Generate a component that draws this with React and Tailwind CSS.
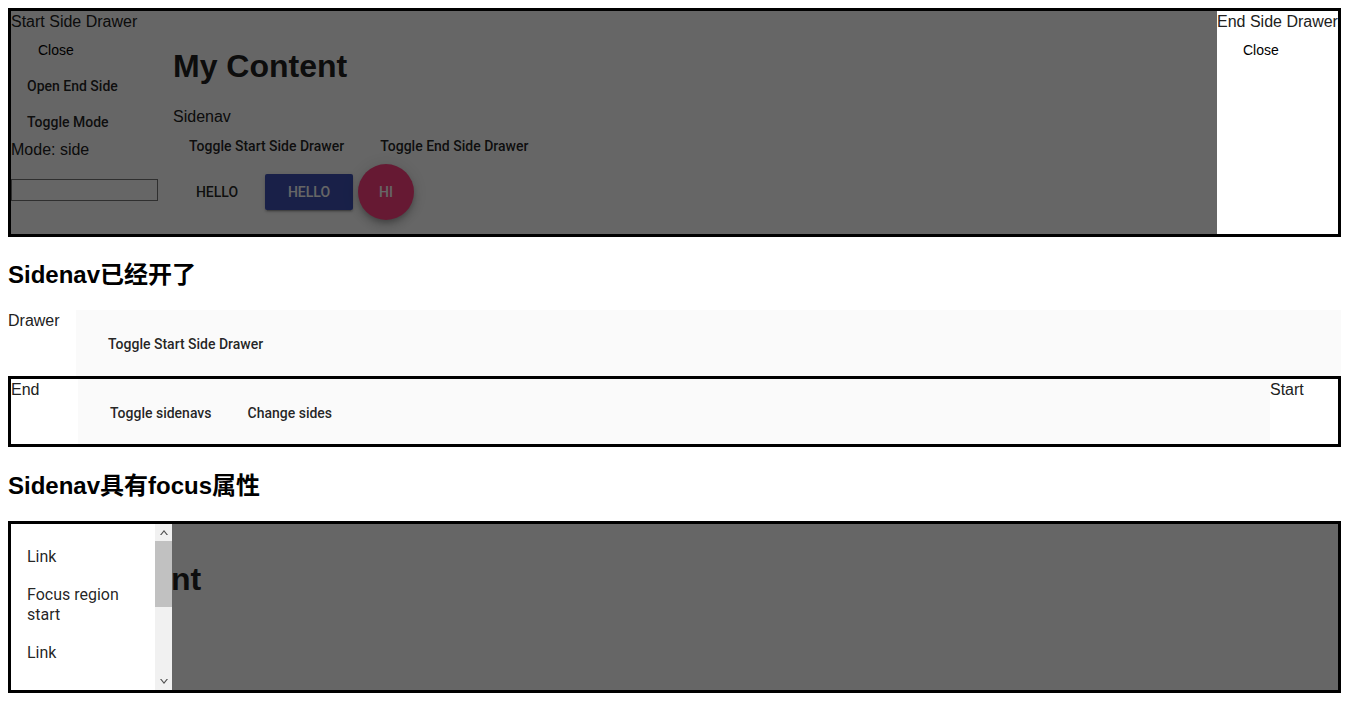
import React from "react";

const sans = "font-['Liberation_Sans','Noto_Sans_CJK_SC',sans-serif]";
const roboto = "font-['Roboto','Liberation_Sans',sans-serif]";

function MatButton({ children, className = "" }) {
  return (
    <button
      className={`h-9 shrink-0 px-4 text-left text-[14px] font-medium leading-9 text-[rgba(0,0,0,0.87)] ${roboto} ${className}`}
    >
      {children}
    </button>
  );
}

function Arrow({ down }) {
  return (
    <svg width="8" height="5" viewBox="0 0 8 5" className={down ? "rotate-180" : ""}>
      <path d="M0 5 L4 0 L8 5 L6.6 5 L4 1.8 L1.4 5 Z" fill="#505050" />
    </svg>
  );
}

export default function App() {
  return (
    <div className={`${sans} min-h-[701px] bg-white px-2 pt-2 text-[16px] text-black`}>
      {/* Section 1 */}
      <div className="relative flex h-[229px] overflow-hidden border-[3px] border-black">
        <aside className="flex w-[147px] shrink-0 flex-col bg-white pt-px">
          <div className="leading-[20px] text-[#212121]">Start Side Drawer</div>
          <button className={`h-9 pl-[27px] text-left text-[14px] leading-9 text-black ${sans}`}>Close</button>
          <MatButton>Open End Side</MatButton>
          <MatButton>Toggle Mode</MatButton>
          <div className="leading-[20px] text-[#212121]">Mode: side</div>
          <input className="mt-[19px] h-[22px] w-[147px] border border-[#767676] bg-white" />
        </aside>
        <main className="flex-1 bg-white pl-[15px] pr-4 pt-4">
          <h1 className="mb-[22px] mt-[21px] text-[32px] font-bold leading-[37px] text-[#212121]">My Content</h1>
          <div className="leading-[20px] text-[#212121]">Sidenav</div>
          <div className="mt-px flex gap-1">
            <MatButton>Toggle Start Side Drawer</MatButton>
            <MatButton>Toggle End Side Drawer</MatButton>
          </div>
          <div className="flex h-14 items-center gap-1">
            <button className={`h-9 w-[88px] text-center text-[14px] font-medium text-[rgba(0,0,0,0.87)] ${roboto}`}>HELLO</button>
            <button className={`h-9 w-[88px] rounded-[2px] bg-[#3f51b5] text-center text-[14px] font-medium text-white shadow-[0_3px_1px_-2px_rgba(0,0,0,0.2),0_2px_2px_0_rgba(0,0,0,0.14),0_1px_5px_0_rgba(0,0,0,0.12)] ${roboto}`}>HELLO</button>
            <button className={`ml-px flex h-14 w-14 items-center justify-center rounded-full bg-[#ff4081] text-[14px] font-medium text-white shadow-[0_3px_5px_-1px_rgba(0,0,0,0.2),0_6px_10px_0_rgba(0,0,0,0.14),0_1px_18px_0_rgba(0,0,0,0.12)] ${roboto}`}>HI</button>
          </div>
        </main>
        <div className="absolute inset-0 bg-black/60" />
        <aside className="absolute bottom-0 right-0 top-0 flex w-[121px] flex-col bg-white pt-px">
          <div className="whitespace-nowrap leading-[20px] text-[#212121]">End Side Drawer</div>
          <button className={`h-9 pl-[26px] text-left text-[14px] leading-9 text-black ${sans}`}>Close</button>
        </aside>
      </div>

      {/* Section 2 */}
      <h2 className="mb-[17px] mt-5 text-[24px] font-bold leading-9">Sidenav已经开了</h2>
      <div className="flex h-[66px]">
        <div className="w-[68px] shrink-0 bg-white pt-px leading-[20px] text-[#212121]">Drawer</div>
        <div className="flex-1 bg-[#fafafa] pl-4 pt-4">
          <MatButton>Toggle Start Side Drawer</MatButton>
        </div>
      </div>
      <div className="flex h-[71px] border-[3px] border-black">
        <div className="w-[67px] shrink-0 bg-white pt-px leading-[20px] text-[#212121]">End</div>
        <div className="flex flex-1 gap-1 bg-[#fafafa] pl-4 pt-4">
          <MatButton>Toggle sidenavs</MatButton>
          <MatButton>Change sides</MatButton>
        </div>
        <div className="w-[68px] shrink-0 bg-white pt-px leading-[20px] text-[#212121]">Start</div>
      </div>

      {/* Section 3 */}
      <h2 className="mb-[17px] mt-[21px] text-[24px] font-bold leading-9">Sidenav具有focus属性</h2>
      <div className="relative h-[172px] overflow-hidden border-[3px] border-black">
        <main className="h-full bg-white px-4 pt-4">
          <h1 className="mt-[21px] text-[32px] font-bold leading-[37px] text-[#212121]">My Content</h1>
        </main>
        <div className="absolute inset-0 bg-black/60" />
        <aside className="absolute bottom-0 left-0 top-0 flex w-[161px] bg-white">
          <nav className={`w-[144px] pt-[9px] text-[16px] text-[rgba(0,0,0,0.87)] ${roboto}`}>
            <div className="flex h-12 items-center px-4">Link</div>
            <div className="flex h-12 items-center px-4 leading-[20px]">Focus region start</div>
            <div className="flex h-12 items-center px-4">Link</div>
          </nav>
          <div className="flex w-[17px] flex-col bg-[#f1f1f1]">
            <div className="flex h-[17px] items-center justify-center">
              <Arrow />
            </div>
            <div className="h-[66px] bg-[#c1c1c1]" />
            <div className="flex-1" />
            <div className="flex h-[17px] items-center justify-center">
              <Arrow down />
            </div>
          </div>
        </aside>
      </div>
    </div>
  );
}
